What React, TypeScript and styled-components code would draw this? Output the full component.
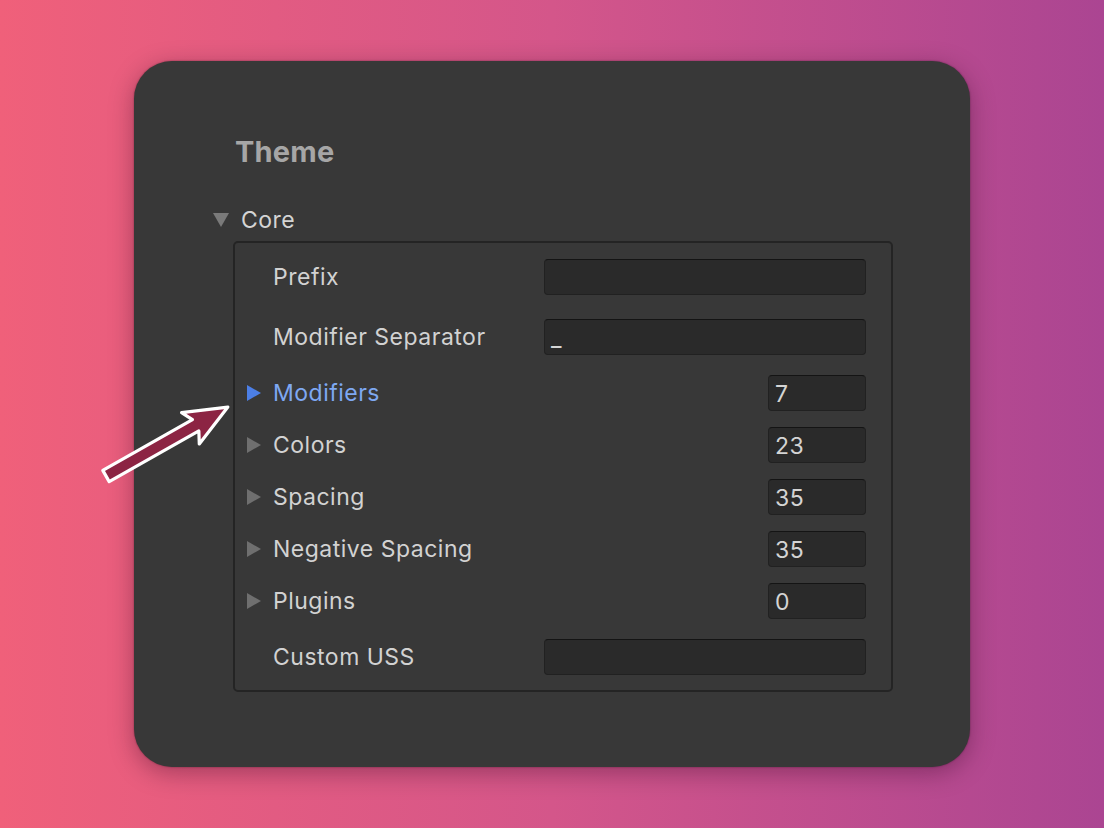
import React from 'react';
import styled, { createGlobalStyle } from 'styled-components';

type FieldKind = 'text' | 'number';

interface RowData {
  label: string;
  foldout?: boolean;
  active?: boolean;
  kind: FieldKind;
  value?: string;
}

const rows: RowData[] = [
  { label: 'Prefix', kind: 'text', value: '' },
  { label: 'Modifier Separator', kind: 'text', value: '_' },
  { label: 'Modifiers', foldout: true, active: true, kind: 'number', value: '7' },
  { label: 'Colors', foldout: true, kind: 'number', value: '23' },
  { label: 'Spacing', foldout: true, kind: 'number', value: '35' },
  { label: 'Negative Spacing', foldout: true, kind: 'number', value: '35' },
  { label: 'Plugins', foldout: true, kind: 'number', value: '0' },
  { label: 'Custom USS', kind: 'text', value: '' },
];

const Arrow = () => (
  <ArrowSvg width={150} height={100} viewBox="0 0 150 100">
    <g transform="translate(16 86) rotate(-29.5)">
      <polygon
        points="0,-6.5 103,-6.5 97,-18 140,0 97,18 103,6.5 0,6.5"
        fill="#8c2443"
        stroke="#ffffff"
        strokeWidth={3.2}
        strokeLinejoin="round"
      />
    </g>
  </ArrowSvg>
);

export default function App() {
  return (
    <Page>
      <GlobalStyle />
      <Card>
        <Title>Theme</Title>
        <CoreRow>
          <DownTriangle />
          <CoreLabel>Core</CoreLabel>
        </CoreRow>
        <Box>
          {rows.map((r) => (
            <Row key={r.label} $foldout={!!r.foldout}>
              <ToggleSlot>{r.foldout && <RightTriangle $active={!!r.active} />}</ToggleSlot>
              <Label $active={!!r.active}>{r.label}</Label>
              <Field $kind={r.kind}>{r.value}</Field>
            </Row>
          ))}
        </Box>
      </Card>
      <Arrow />
    </Page>
  );
}

const GlobalStyle = createGlobalStyle`
  html, body {
    margin: 0;
    padding: 0;
  }
  body {
    font-family: Inter, "Noto Sans", "Liberation Sans", sans-serif;
  }
`;

const Page = styled.div`
  position: relative;
  width: 1104px;
  height: 828px;
  display: flex;
  align-items: center;
  justify-content: center;
  background: linear-gradient(90deg, #f0607a 0%, #d4568a 50%, #ab4592 100%);
  overflow: hidden;
`;

const Card = styled.div`
  box-sizing: border-box;
  width: 836px;
  height: 706px;
  padding: 73px 77px 0 79px;
  background: #383838;
  border-radius: 38px;
  box-shadow: 0 6px 24px rgba(40, 0, 30, 0.35), 0 0 2px rgba(0, 0, 0, 0.4);
  display: flex;
  flex-direction: column;
`;

const Title = styled.div`
  margin-left: 22px;
  height: 36px;
  line-height: 36px;
  font-size: 29px;
  font-weight: 700;
  color: #a6a6a6;
  letter-spacing: 0.2px;
`;

const CoreRow = styled.div`
  margin-top: 34px;
  height: 32px;
  display: flex;
  align-items: center;
  gap: 12px;
`;

const DownTriangle = styled.span`
  width: 0;
  height: 0;
  border-left: 8px solid transparent;
  border-right: 8px solid transparent;
  border-top: 14px solid #7a7a7a;
`;

const CoreLabel = styled.span`
  font-size: 23px;
  letter-spacing: 0.5px;
  color: #d4d4d4;
`;

const Box = styled.div`
  margin: 5px 0 0 20px;
  border: 2px solid #242424;
  border-radius: 5px;
  padding: 4px 25px 3px 12px;
  display: flex;
  flex-direction: column;
`;

const Row = styled.div<{ $foldout: boolean }>`
  display: flex;
  align-items: center;
  padding: ${(p) => (p.$foldout ? '8px 0' : '12px 0')};
`;

const ToggleSlot = styled.div`
  width: 26px;
  flex: none;
  display: flex;
  align-items: center;
`;

const RightTriangle = styled.span<{ $active: boolean }>`
  width: 0;
  height: 0;
  border-top: 8px solid transparent;
  border-bottom: 8px solid transparent;
  border-left: 14px solid ${(p) => (p.$active ? '#4c7fe6' : '#6f6f6f')};
`;

const Label = styled.div<{ $active: boolean }>`
  flex: 1;
  font-size: 23px;
  letter-spacing: 0.5px;
  color: ${(p) => (p.$active ? '#7ea8f2' : '#d2d2d2')};
  white-space: nowrap;
`;

const Field = styled.div<{ $kind: FieldKind }>`
  box-sizing: border-box;
  flex: none;
  width: ${(p) => (p.$kind === 'number' ? '98px' : '322px')};
  height: 36px;
  padding: 0 6px;
  background: #2a2a2a;
  border: 1px solid #212121;
  border-top-color: #141414;
  border-radius: 4px;
  font-size: 23px;
  letter-spacing: 0.5px;
  line-height: 36px;
  color: #d4d4d4;
`;

const ArrowSvg = styled.svg`
  position: absolute;
  left: 90px;
  top: 390px;
  overflow: visible;
`;
